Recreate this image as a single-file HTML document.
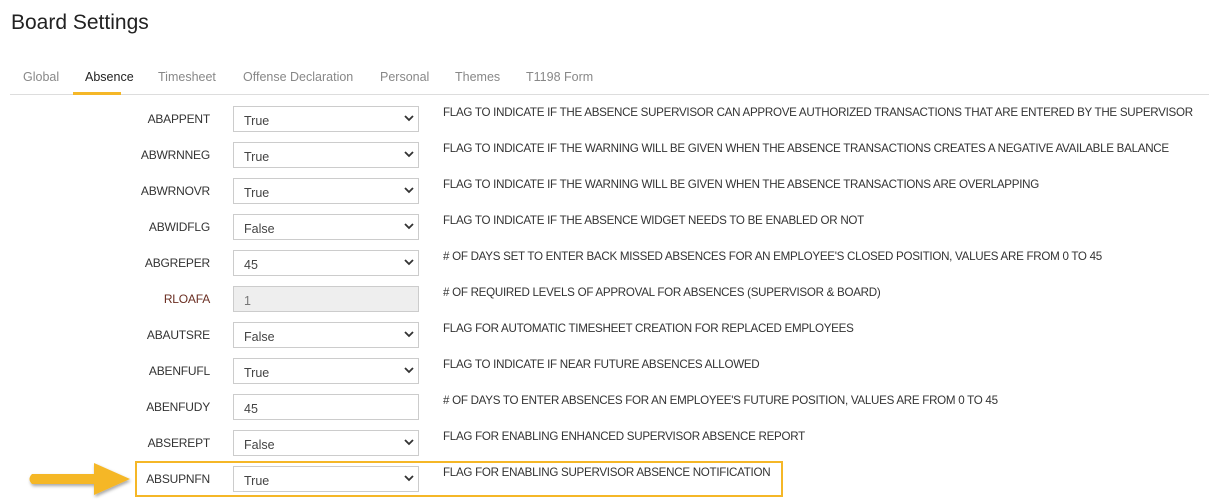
<!DOCTYPE html>
<html><head><style>
body{margin:0;width:1209px;height:501px;background:#fff;font-family:"Liberation Sans",sans-serif;color:#333;position:relative;overflow:hidden}
h1{position:absolute;left:11px;top:11px;margin:0;font-weight:normal;font-size:21px;color:#222}
.tabs{position:absolute;left:10px;top:94px;width:1199px;border-top:1px solid #ddd}
.tab{position:absolute;top:70px;font-size:12.5px;color:#888}
.ul{position:absolute;left:73px;top:92px;width:48px;height:3px;background:#f5b727}
.row{position:absolute;left:0;width:1209px;height:26px}
.lbl{position:absolute;right:999px;top:6px;font-size:12px;color:#333;letter-spacing:-0.2px}
.box{position:absolute;left:233px;top:0;width:184px;height:24px;border:1px solid #ccc;font-size:12.5px;color:#444;box-sizing:content-box}
.box span{position:absolute;left:10px;top:7px}
.box svg{position:absolute;right:4px;top:8px}
.dis{background:#eee;color:#777}
.desc{position:absolute;left:443px;top:0px;font-size:11.6px;color:#333;letter-spacing:-0.28px;white-space:nowrap}
.hl{position:absolute;left:135px;top:461px;width:644px;height:32px;border:2px solid #f5b727}
</style></head><body>
<h1>Board Settings</h1>
<div class="tab" style="left:23px">Global</div>
<div class="tab" style="left:85px;color:#222">Absence</div>
<div class="tab" style="left:158px">Timesheet</div>
<div class="tab" style="left:243px">Offense Declaration</div>
<div class="tab" style="left:380px">Personal</div>
<div class="tab" style="left:455px">Themes</div>
<div class="tab" style="left:526px">T1198 Form</div>
<div class="tabs"></div>
<div class="ul"></div>

<div class="row" style="top:106px"><div class="lbl">ABAPPENT</div><div class="box"><span>True</span><svg width="10" height="7" viewBox="0 0 10 7"><path d="M1 1l4 4 4-4" fill="none" stroke="#333" stroke-width="1.8"/></svg></div><div class="desc">FLAG TO INDICATE IF THE ABSENCE SUPERVISOR CAN APPROVE AUTHORIZED TRANSACTIONS THAT ARE ENTERED BY THE SUPERVISOR</div></div>
<div class="row" style="top:142px"><div class="lbl">ABWRNNEG</div><div class="box"><span>True</span><svg width="10" height="7" viewBox="0 0 10 7"><path d="M1 1l4 4 4-4" fill="none" stroke="#333" stroke-width="1.8"/></svg></div><div class="desc">FLAG TO INDICATE IF THE WARNING WILL BE GIVEN WHEN THE ABSENCE TRANSACTIONS CREATES A NEGATIVE AVAILABLE BALANCE</div></div>
<div class="row" style="top:178px"><div class="lbl">ABWRNOVR</div><div class="box"><span>True</span><svg width="10" height="7" viewBox="0 0 10 7"><path d="M1 1l4 4 4-4" fill="none" stroke="#333" stroke-width="1.8"/></svg></div><div class="desc">FLAG TO INDICATE IF THE WARNING WILL BE GIVEN WHEN THE ABSENCE TRANSACTIONS ARE OVERLAPPING</div></div>
<div class="row" style="top:214px"><div class="lbl">ABWIDFLG</div><div class="box"><span>False</span><svg width="10" height="7" viewBox="0 0 10 7"><path d="M1 1l4 4 4-4" fill="none" stroke="#333" stroke-width="1.8"/></svg></div><div class="desc">FLAG TO INDICATE IF THE ABSENCE WIDGET NEEDS TO BE ENABLED OR NOT</div></div>
<div class="row" style="top:250px"><div class="lbl">ABGREPER</div><div class="box"><span>45</span><svg width="10" height="7" viewBox="0 0 10 7"><path d="M1 1l4 4 4-4" fill="none" stroke="#333" stroke-width="1.8"/></svg></div><div class="desc"># OF DAYS SET TO ENTER BACK MISSED ABSENCES FOR AN EMPLOYEE'S CLOSED POSITION, VALUES ARE FROM 0 TO 45</div></div>
<div class="row" style="top:286px"><div class="lbl" style="color:#6a2e22">RLOAFA</div><div class="box dis"><span>1</span></div><div class="desc"># OF REQUIRED LEVELS OF APPROVAL FOR ABSENCES (SUPERVISOR &amp; BOARD)</div></div>
<div class="row" style="top:322px"><div class="lbl">ABAUTSRE</div><div class="box"><span>False</span><svg width="10" height="7" viewBox="0 0 10 7"><path d="M1 1l4 4 4-4" fill="none" stroke="#333" stroke-width="1.8"/></svg></div><div class="desc">FLAG FOR AUTOMATIC TIMESHEET CREATION FOR REPLACED EMPLOYEES</div></div>
<div class="row" style="top:358px"><div class="lbl">ABENFUFL</div><div class="box"><span>True</span><svg width="10" height="7" viewBox="0 0 10 7"><path d="M1 1l4 4 4-4" fill="none" stroke="#333" stroke-width="1.8"/></svg></div><div class="desc">FLAG TO INDICATE IF NEAR FUTURE ABSENCES ALLOWED</div></div>
<div class="row" style="top:394px"><div class="lbl">ABENFUDY</div><div class="box"><span>45</span></div><div class="desc"># OF DAYS TO ENTER ABSENCES FOR AN EMPLOYEE'S FUTURE POSITION, VALUES ARE FROM 0 TO 45</div></div>
<div class="row" style="top:430px"><div class="lbl">ABSEREPT</div><div class="box"><span>False</span><svg width="10" height="7" viewBox="0 0 10 7"><path d="M1 1l4 4 4-4" fill="none" stroke="#333" stroke-width="1.8"/></svg></div><div class="desc">FLAG FOR ENABLING ENHANCED SUPERVISOR ABSENCE REPORT</div></div>
<div class="row" style="top:466px"><div class="lbl">ABSUPNFN</div><div class="box"><span>True</span><svg width="10" height="7" viewBox="0 0 10 7"><path d="M1 1l4 4 4-4" fill="none" stroke="#333" stroke-width="1.8"/></svg></div><div class="desc">FLAG FOR ENABLING SUPERVISOR ABSENCE NOTIFICATION</div></div>
<div class="hl"></div>
<svg style="position:absolute;left:24px;top:460px" width="112" height="40" viewBox="0 0 112 40">
<defs><filter id="s"><feDropShadow dx="1" dy="2" stdDeviation="1.5" flood-color="#000" flood-opacity="0.35"/></filter></defs>
<path d="M8 14 H70 V3 L106 19 L70 35 V24 H8 Q3 19 8 14 Z" fill="#f5b727" filter="url(#s)"/>
</svg>
</body></html>
